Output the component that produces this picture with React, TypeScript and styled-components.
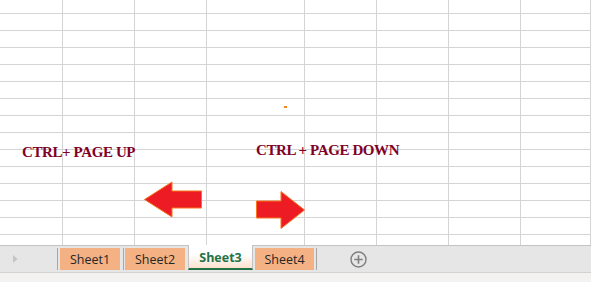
import React from "react";
import styled, { createGlobalStyle } from "styled-components";

const Global = createGlobalStyle`
  html, body { margin: 0; padding: 0; background: #ffffff; overflow: hidden; }
  #root { width: 591px; height: 282px; }
`;

const Page = styled.div`
  width: 591px;
  height: 282px;
  display: flex;
  flex-direction: column;
  font-family: "Open Sans", "Noto Sans", sans-serif;
`;

const SheetArea = styled.div`
  position: relative;
  height: 245px;
  overflow: hidden;
  background: #ffffff;
`;

const Grid = styled.div`
  display: grid;
  grid-template-columns: 63px 72px 72px 98px 72px 72px 72px 1fr;
  grid-template-rows: 14px repeat(13, 17px) 1fr;
  height: 100%;
`;

const Cell = styled.div<{ $last: boolean }>`
  box-sizing: border-box;
  border-right: 1px solid #d4d4d4;
  border-bottom: ${(p) => (p.$last ? "none" : "1px solid #d4d4d4")};
`;

const Label = styled.div<{ $x: number; $y: number }>`
  position: absolute;
  left: ${(p) => p.$x}px;
  top: ${(p) => p.$y}px;
  font-family: "Liberation Serif", "Times New Roman", serif;
  font-weight: bold;
  font-size: 15px;
  line-height: 1;
  letter-spacing: -0.4px;
  color: #800026;
  white-space: nowrap;
`;

const Shape = styled.svg<{ $x: number; $y: number }>`
  position: absolute;
  left: ${(p) => p.$x}px;
  top: ${(p) => p.$y}px;
  overflow: visible;
`;

const Dot = styled.div`
  position: absolute;
  left: 284px;
  top: 106px;
  width: 3px;
  height: 2px;
  background: #f7861d;
`;

const TabBar = styled.div`
  box-sizing: content-box;
  height: 24px;
  padding-top: 2px;
  background: #e6e6e6;
  border-top: 1px solid #c3c3c3;
  border-bottom: 1px solid #d2d2d2;
  display: flex;
  align-items: flex-start;
`;

const ScrollArea = styled.div`
  width: 57px;
  height: 22px;
  display: flex;
  align-items: center;
  padding-left: 13px;
  box-sizing: border-box;
`;

const Separator = styled.div<{ $ml: number }>`
  width: 1px;
  height: 22px;
  margin-left: ${(p) => p.$ml}px;
  background: #a6a6a6;
`;

const Tab = styled.div<{ $w: number; $ml: number }>`
  width: ${(p) => p.$w}px;
  margin-left: ${(p) => p.$ml}px;
  height: 22px;
  background: #f4b183;
  color: #262626;
  font-size: 12.5px;
  display: flex;
  align-items: center;
  justify-content: center;
`;

const ActiveTab = styled.div<{ $ml: number }>`
  box-sizing: border-box;
  width: 65px;
  margin-left: ${(p) => p.$ml}px;
  margin-top: -3px;
  height: 25px;
  padding-top: 2px;
  background: linear-gradient(#ffffff 0%, #ffffff 40%, #fbe1cf 100%);
  border-left: 1px solid #c3c3c3;
  border-right: 1px solid #c3c3c3;
  border-bottom: 2px solid #217346;
  color: #217346;
  font-weight: bold;
  font-size: 12.5px;
  display: flex;
  align-items: center;
  justify-content: center;
`;

const AddButton = styled.div`
  margin-left: 33px;
  height: 22px;
  display: flex;
  align-items: center;
`;

const StatusBar = styled.div`
  flex: 1;
  background: #f3f2f1;
`;

const ROWS = 15;
const COLS = 8;

export default function App() {
  const cells: React.ReactNode[] = [];
  for (let r = 0; r < ROWS; r++) {
    for (let c = 0; c < COLS; c++) {
      cells.push(<Cell key={`${r}-${c}`} $last={r === ROWS - 1} />);
    }
  }
  return (
    <>
      <Global />
      <Page>
        <SheetArea>
          <Grid>{cells}</Grid>
          <Dot />
          <Label $x={22} $y={145}>CTRL+ PAGE UP</Label>
          <Label $x={256} $y={143}>CTRL + PAGE DOWN</Label>
          <Shape $x={143} $y={181} width={60} height={38} viewBox="0 0 60 38">
            <polygon
              points="1.5,18.5 29,1 29,10 58.5,10 58.5,27 29,27 29,36"
              fill="#ed1c24"
              stroke="#f7741d"
              strokeWidth={1}
            />
          </Shape>
          <Shape $x={255} $y={190} width={51} height={40} viewBox="0 0 51 40">
            <polygon
              points="1.5,11 26,11 26,1.5 49.5,20 26,38.5 26,28 1.5,28"
              fill="#ed1c24"
              stroke="#f7741d"
              strokeWidth={1}
            />
          </Shape>
        </SheetArea>
        <TabBar>
          <ScrollArea>
            <svg width="5" height="8" viewBox="0 0 5 8">
              <polygon points="0,0 4.5,4 0,8" fill="#c4c4c4" />
            </svg>
          </ScrollArea>
          <Separator $ml={0} />
          <Tab $w={60} $ml={2}>Sheet1</Tab>
          <Separator $ml={3} />
          <Tab $w={60} $ml={1}>Sheet2</Tab>
          <ActiveTab $ml={3}>Sheet3</ActiveTab>
          <Tab $w={59} $ml={2}>Sheet4</Tab>
          <Separator $ml={2} />
          <AddButton>
            <svg width="17" height="17" viewBox="0 0 17 17">
              <circle cx="8.5" cy="8.5" r="7.5" fill="none" stroke="#7f7f7f" strokeWidth="1.4" />
              <path d="M8.5 4.3 V12.7 M4.3 8.5 H12.7" stroke="#7f7f7f" strokeWidth="1.6" />
            </svg>
          </AddButton>
        </TabBar>
        <StatusBar />
      </Page>
    </>
  );
}
